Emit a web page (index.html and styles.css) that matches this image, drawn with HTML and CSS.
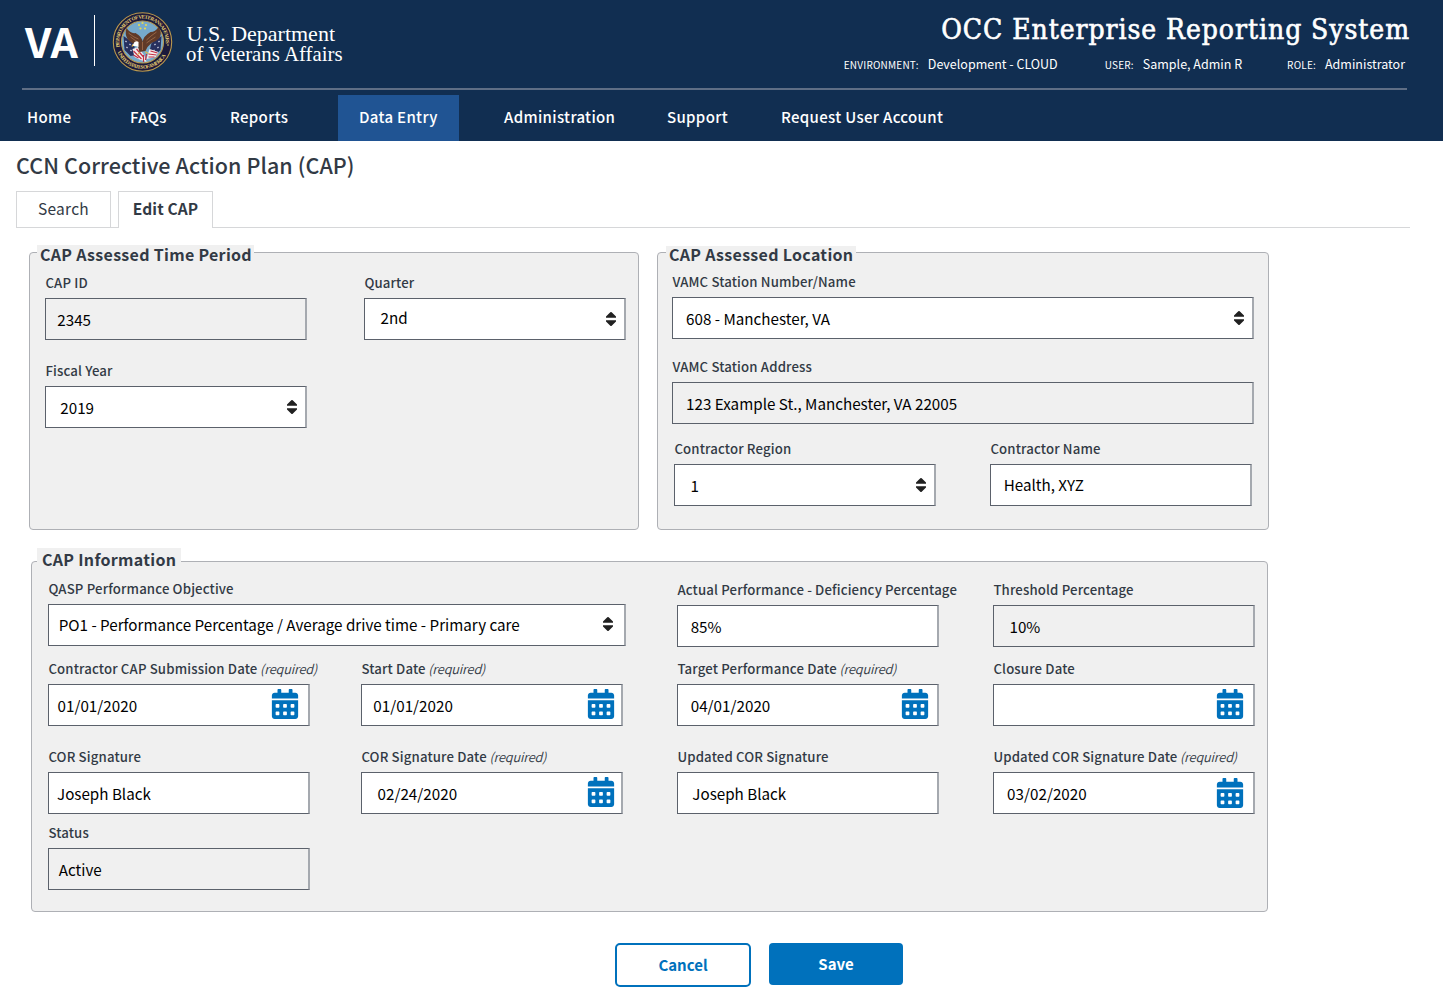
FILE: index.html
```html
<!DOCTYPE html>
<html lang="en">
<head>
<meta charset="utf-8">
<title>OCC Enterprise Reporting System</title>
<link rel="stylesheet" href="styles.css">
</head>
<body>
<svg class="symbols" width="0" height="0" aria-hidden="true">
  <symbol id="calendar" viewBox="0 0 448 512">
    <path d="M0 464c0 26.500 21.500 48 48 48h352c26.500 0 48-21.500 48-48V192H0v272zm320-196c0-6.600 5.400-12 12-12h40c6.600 0 12 5.400 12 12v40c0 6.600-5.400 12-12 12h-40c-6.600 0-12-5.400-12-12v-40zm0 128c0-6.600 5.400-12 12-12h40c6.600 0 12 5.400 12 12v40c0 6.600-5.400 12-12 12h-40c-6.600 0-12-5.400-12-12v-40zM192 268c0-6.600 5.400-12 12-12h40c6.600 0 12 5.400 12 12v40c0 6.600-5.400 12-12 12h-40c-6.600 0-12-5.400-12-12v-40zm0 128c0-6.600 5.400-12 12-12h40c6.600 0 12 5.400 12 12v40c0 6.600-5.400 12-12 12h-40c-6.600 0-12-5.400-12-12v-40zM64 268c0-6.600 5.400-12 12-12h40c6.600 0 12 5.400 12 12v40c0 6.600-5.400 12-12 12H76c-6.600 0-12-5.400-12-12v-40zm0 128c0-6.600 5.400-12 12-12h40c6.600 0 12 5.400 12 12v40c0 6.600-5.400 12-12 12H76c-6.600 0-12-5.400-12-12v-40zM400 64h-48V16c0-8.800-7.200-16-16-16h-32c-8.800 0-16 7.200-16 16v48H160V16c0-8.800-7.200-16-16-16h-32c-8.800 0-16 7.200-16 16v48H48C21.500 64 0 85.500 0 112v48h448v-48c0-26.500-21.500-48-48-48z"/>
  </symbol>
  <symbol id="sort" viewBox="0 0 10 14">
    <path d="M0 5.800V4.600L4.300.3Q5-.3 5.700.3L10 4.600v1.200zM0 8.200v1.200l4.300 4.300q.7.600 1.400 0L10 9.400V8.200z"/>
  </symbol>
</svg>

<header class="masthead">
  <div class="brand-row">
    <svg class="brand" width="330" height="72" viewBox="20 8 330 72">
      <text class="brand-va" x="25" y="58" textLength="53" lengthAdjust="spacingAndGlyphs">VA</text>
      <rect x="94" y="15" width="1" height="51" fill="#fff"/>
      <g transform="translate(142.500 42)">
        <circle r="29.800" fill="#1c1a3c"/>
        <circle r="29.200" fill="none" stroke="#b89a50" stroke-width="1.100"/>
        <circle r="21" fill="#76a9cb" stroke="#b89a50" stroke-width="1.100"/>
        <path id="arc-top" d="M-22.600 5A23.200 23.200 0 1 1 22.600 5" fill="none"/>
        <path id="arc-low" d="M-25 10A27 27 0 0 0 25 10" fill="none"/>
        <text class="seal-text"><textPath href="#arc-top" textLength="80">DEPARTMENT OF VETERANS AFFAIRS</textPath></text>
        <text class="seal-text"><textPath href="#arc-low" textLength="60">UNITED STATES OF AMERICA</textPath></text>
        <circle cx="-25.500" cy="3" r=".8" fill="#e6cd70"/>
        <circle cx="25.500" cy="3" r=".8" fill="#e6cd70"/>
        <g fill="#e8d94e">
          <circle cx="0" cy="-19" r="1.100"/><circle cx="-3.500" cy="-17" r="1.100"/><circle cx="3.500" cy="-17" r="1.100"/><circle cx="-2" cy="-13.500" r="1.100"/><circle cx="2.500" cy="-13.500" r="1.100"/>
        </g>
        <path d="M-19-6L-9 1-6 13-12 14-18 8z" fill="#27305f"/>
        <path d="M19-6L9 1 6 13 12 14 18 8z" fill="#27305f"/>
        <path d="M-17-1l1 1m3 2l1 1m-4 2l1 1m3 2l1 1M17-1l-1 1m-3 2l-1 1m4 2l-1 1m-3 2l-1 1" stroke="#dfe3ef" stroke-width="1.100"/>
        <path d="M-10 7L-4 5 2 14 4 20-2 18-8 15zM7 7l9 3-3 5-9 2z" fill="#f3ecec"/>
        <path d="M-9 9l8 8M-6 7l7 8M-9 13l5 3M1 13l0 7M4 12l-1 6M8 9l7 2M6 12l8 1M6 15l6 0" stroke="#c32e43" stroke-width="1.200"/>
        <path d="M-16-14Q-12-8-7-9 0-5 0 0 1-6 8-10 13-10 16-15 20-9 17-4 13 0 9 1 5 4 3 9L-3 10-5 3Q-11 2-15-3-18-8-16-14z" fill="#603a28"/>
        <path d="M-14-9Q-8-4-4-3M-12-5Q-7-1-4 0M14-10Q8-6 4-2M13-5Q8-2 4 1M0 0L0 8" fill="none" stroke="#9c6947" stroke-width=".9"/>
        <path d="M-4 0Q-8-2-9 2L-11 4-7 4-4 5z" fill="#fff"/>
        <path d="M-10 2l-1 3 2-1zM-3 10l-3 3 3-1zM3 9l4 3-4-1z" fill="#e4b83d"/>
      </g>
      <g class="brand-name">
        <text x="186.500" y="41" textLength="148.500" lengthAdjust="spacingAndGlyphs">U.S. Department</text>
        <text x="186" y="60.500" textLength="156.500" lengthAdjust="spacingAndGlyphs">of Veterans Affairs</text>
      </g>
    </svg>
    <div class="system">
      <h1 class="system-name">OCC Enterprise Reporting System</h1>
      <dl class="session">
        <div class="session-item environment"><dt>ENVIRONMENT:</dt><dd>Development - CLOUD</dd></div>
        <div class="session-item"><dt>USER:</dt><dd>Sample, Admin R</dd></div>
        <div class="session-item"><dt>ROLE:</dt><dd>Administrator</dd></div>
      </dl>
    </div>
  </div>
  <nav class="nav">
    <a>Home</a><a>FAQs</a><a>Reports</a><a class="active">Data Entry</a><a>Administration</a><a>Support</a><a>Request User Account</a>
  </nav>
</header>

<main class="page">
  <h2 class="page-title">CCN Corrective Action Plan (CAP)</h2>
  <div class="tabs"><a class="tab">Search</a><a class="tab current">Edit CAP</a></div>

  <div class="panels">
    <section class="panel period">
      <h3 class="legend">CAP Assessed Time Period</h3>
      <div class="field"><label>CAP ID</label><div class="box readonly in-12"><span>2345</span></div></div>
      <div class="field"><label>Quarter</label><div class="box in-16 raised"><span>2nd</span><svg class="sort"><use href="#sort"/></svg></div></div>
      <div class="field"><label>Fiscal Year</label><div class="box in-15"><span>2019</span><svg class="sort"><use href="#sort"/></svg></div></div>
    </section>

    <section class="panel location">
      <h3 class="legend">CAP Assessed Location</h3>
      <div class="field"><label>VAMC Station Number/Name</label><div class="box in-14"><span>608 - Manchester, VA</span><svg class="sort"><use href="#sort"/></svg></div></div>
      <div class="field address"><label>VAMC Station Address</label><div class="box readonly in-14"><span>123 Example St., Manchester, VA 22005</span></div></div>
      <div class="contractor">
        <div class="field"><label>Contractor Region</label><div class="box in-17"><span>1</span><svg class="sort"><use href="#sort"/></svg></div></div>
        <div class="field"><label>Contractor Name</label><div class="box in-13 raised-half"><span>Health, XYZ</span></div></div>
      </div>
    </section>
  </div>

  <section class="panel information">
    <h3 class="legend">CAP Information</h3>
    <div class="row objective-row">
      <div class="field objective"><label>QASP Performance Objective</label><div class="box in-10 raised-half"><span>PO1 - Performance Percentage / Average drive time - Primary care</span><svg class="sort shifted"><use href="#sort"/></svg></div></div>
      <div class="field lowered"><label>Actual Performance - Deficiency Percentage</label><div class="box in-13"><span>85%</span></div></div>
      <div class="field lowered"><label>Threshold Percentage</label><div class="box readonly in-16"><span>10%</span></div></div>
    </div>
    <div class="row">
      <div class="field"><label>Contractor CAP Submission Date <em>(required)</em></label><div class="box date in-9"><span>01/01/2020</span><svg class="cal end-9"><use href="#calendar"/></svg></div></div>
      <div class="field"><label>Start Date <em>(required)</em></label><div class="box date in-12"><span>01/01/2020</span><svg class="cal end-6"><use href="#calendar"/></svg></div></div>
      <div class="field"><label>Target Performance Date <em>(required)</em></label><div class="box date in-13"><span>04/01/2020</span><svg class="cal end-8"><use href="#calendar"/></svg></div></div>
      <div class="field"><label>Closure Date</label><div class="box date"><span></span><svg class="cal end-9"><use href="#calendar"/></svg></div></div>
    </div>
    <div class="row signatures">
      <div class="field"><label>COR Signature</label><div class="box in-8"><span>Joseph Black</span></div></div>
      <div class="field"><label>COR Signature Date <em>(required)</em></label><div class="box date in-16"><span>02/24/2020</span><svg class="cal end-6"><use href="#calendar"/></svg></div></div>
      <div class="field"><label>Updated COR Signature</label><div class="box in-15"><span>Joseph Black</span></div></div>
      <div class="field"><label>Updated COR Signature Date <em>(required)</em></label><div class="box date in-14"><span>03/02/2020</span><svg class="cal end-9 dropped"><use href="#calendar"/></svg></div></div>
    </div>
    <div class="row status">
      <div class="field"><label>Status</label><div class="box readonly in-10"><span>Active</span></div></div>
    </div>
  </section>

  <div class="actions">
    <button class="btn secondary">Cancel</button>
    <button class="btn primary">Save</button>
  </div>
</main>
</body>
</html>
```
FILE: styles.css
```css
* { box-sizing: border-box; }

body {
  margin: 0;
  background: #fff;
  color: #323a45;
  font-family: "Noto Sans CJK SC", "Noto Sans", sans-serif;
  font-size: 15px;
}

h1, h2, h3, dl, dd { margin: 0; }

.symbols { display: block; }

/* Masthead */
.masthead {
  height: 141px;
  background: #112e51;
  color: #fff;
}

.brand-row {
  display: flex;
  justify-content: space-between;
  height: 90px;
  margin: 0 36px 0 22px;
  padding-top: 8px;
  border-bottom: 2px solid #5f6e85;
}

.brand { flex: none; margin-left: -2px; overflow: visible; }
.brand-va { font-size: 41px; font-weight: 700; fill: #fff; }
.brand-name { font-family: "Liberation Serif", serif; font-size: 22px; fill: #fff; }
.seal-text { font-family: "Liberation Serif", serif; font-size: 5.200px; font-weight: 700; fill: #e6cd70; }

.system {
  display: flex;
  flex-direction: column;
  align-items: flex-end;
  margin-right: -4px;
}

.system-name {
  margin-right: 1px;
  font-family: "DejaVu Serif Condensed", "DejaVu Serif", serif;
  font-stretch: condensed;
  font-size: 28px;
  font-weight: 400;
  letter-spacing: .93px;
  line-height: 44px;
  white-space: nowrap;
  -webkit-text-stroke: .6px #fff;
}

.session {
  display: flex;
  gap: 45px;
  padding-right: 6px;
  line-height: 24px;
  font-size: 12.500px;
}

.session-item { display: flex; gap: 9px; align-items: baseline; }
.session-item.environment { margin-right: 2px; }
.session dt { font-size: 10px; letter-spacing: .2px; }

.nav {
  display: grid;
  grid-template-columns: 103px 100px 108px 166px 163px 114px 1fr;
  height: 46px;
  margin-top: 5px;
  padding-left: 27px;
  font-size: 15px;
  font-weight: 500;
  letter-spacing: .33px;
  line-height: 43px;
  white-space: nowrap;
}

.nav .active {
  width: 121px;
  padding-left: 21px;
  background: #205493;
}

/* Page heading and tabs */
.page-title {
  height: 50px;
  padding-left: 16px;
  font-size: 21.500px;
  font-weight: 500;
  letter-spacing: .07px;
  line-height: 48px;
}

.tabs {
  display: flex;
  gap: 7px;
  height: 37px;
  margin: 0 33px 0 16px;
  border-bottom: 1px solid #d6d7d9;
}

.tab {
  width: 95px;
  height: 36px;
  border: 1px solid #d6d7d9;
  border-bottom: 0;
  text-align: center;
  font-size: 15.500px;
  letter-spacing: .25px;
  line-height: 33px;
}

.tab.current {
  height: 37px;
  background: #fff;
  font-weight: 700;
  letter-spacing: .12px;
}

/* Panels */
.panels {
  display: flex;
  gap: 18px;
  padding: 24px 0 0 29px;
}

.panel {
  border: 1px solid #aeb0b5;
  border-radius: 4px;
  background: #f0f0f0;
}

.legend {
  height: 26px;
  padding: 0 3px;
  background: #f0f0f0;
  font-size: 16px;
  font-weight: 700;
  letter-spacing: .3px;
  line-height: 17px;
  white-space: nowrap;
}

.period {
  display: grid;
  grid-template-columns: 262px 262px;
  grid-template-rows: 20px 88px 88px;
  column-gap: 57px;
  width: 610px;
  height: 278px;
  padding-left: 15px;
}

.period .legend {
  grid-column: 1 / -1;
  justify-self: start;
  margin: -8px 0 0 -8px;
  width: 217px;
  line-height: 19px;
}

.location {
  width: 612px;
  height: 278px;
  padding-left: 14px;
}

.location .legend { width: 190px; margin: -7px 0 0 -6px; }
.location > .field { width: 582px; }
.address { margin-top: 18px; }
.contractor { display: flex; gap: 54px; margin: 15px 0 0 2px; }

.information {
  width: 1237px;
  height: 351px;
  margin: 31px 0 0 31px;
  padding-left: 16px;
}

.information .legend { width: 144px; height: 31px; margin: -14px 0 0 -11px; padding-left: 5px; line-height: 22px; }

.row {
  display: grid;
  grid-template-columns: 313px 316px 316px 262px;
}

.objective-row { height: 80px; }
.objective { grid-column: span 2; }
.signatures { margin-top: 21px; }
.status { margin-top: 9px; }

/* Fields */
.field {
  display: flex;
  flex-direction: column;
  gap: 6px;
  height: 67px;
  width: 262px;
}

.field.objective { width: 578px; }
.lowered { margin-top: 1px; }

.field label {
  padding-left: .4px;
  font-size: 13.200px;
  font-weight: 500;
  letter-spacing: .15px;
  line-height: 19px;
  white-space: nowrap;
}

.field em {
  margin-left: -.5px;
  font-size: 12.800px;
  font-weight: 350;
  letter-spacing: -.2px;
}

.box {
  display: flex;
  justify-content: space-between;
  height: 42px;
  border: 1px solid #5b616b;
  border-right: 2px solid #a5a9af;
  background: #fff;
  color: #000;
  font-size: 15.200px;
  line-height: 40px;
  white-space: nowrap;
}

.date { letter-spacing: .03px; }
.readonly { background: #f0f0f0; }
.raised { line-height: 36px; }
.raised-half { line-height: 39px; }

.in-8 { padding-left: 8px; }
.in-9 { padding-left: 8.500px; }
.in-10 { padding-left: 9.700px; }
.in-12 { padding-left: 11.300px; }
.in-13 { padding-left: 12.700px; }
.in-14 { padding-left: 13.100px; }
.in-15 { padding-left: 14.300px; }
.in-16 { padding-left: 15.500px; }
.in-17 { padding-left: 15.500px; }

.sort { width: 10px; height: 14px; margin: 13px 8px 0 0; fill: #212121; }
.sort.shifted { margin: 12px 11px 0 0; }

.cal { width: 28px; height: 30px; margin-top: 4px; fill: #0071bc; }
.cal.dropped { margin-top: 5px; }
.end-6 { margin-right: 6px; }
.end-8 { margin-right: 8px; }
.end-9 { margin-right: 9px; }

/* Buttons */
.actions {
  display: flex;
  gap: 18px;
  align-items: flex-start;
  padding: 31px 0 0 615px;
}

.btn {
  padding: 0;
  border: 0;
  border-radius: 4px;
  font-family: inherit;
  font-size: 15px;
  font-weight: 700;
  line-height: 40px;
}

.btn.secondary {
  width: 136px;
  height: 44px;
  border: 2px solid #0071bc;
  border-radius: 5px;
  background: #fff;
  color: #0071bc;
}

.btn.primary {
  width: 134px;
  height: 42px;
  background: #0071bc;
  color: #fff;
}
```
